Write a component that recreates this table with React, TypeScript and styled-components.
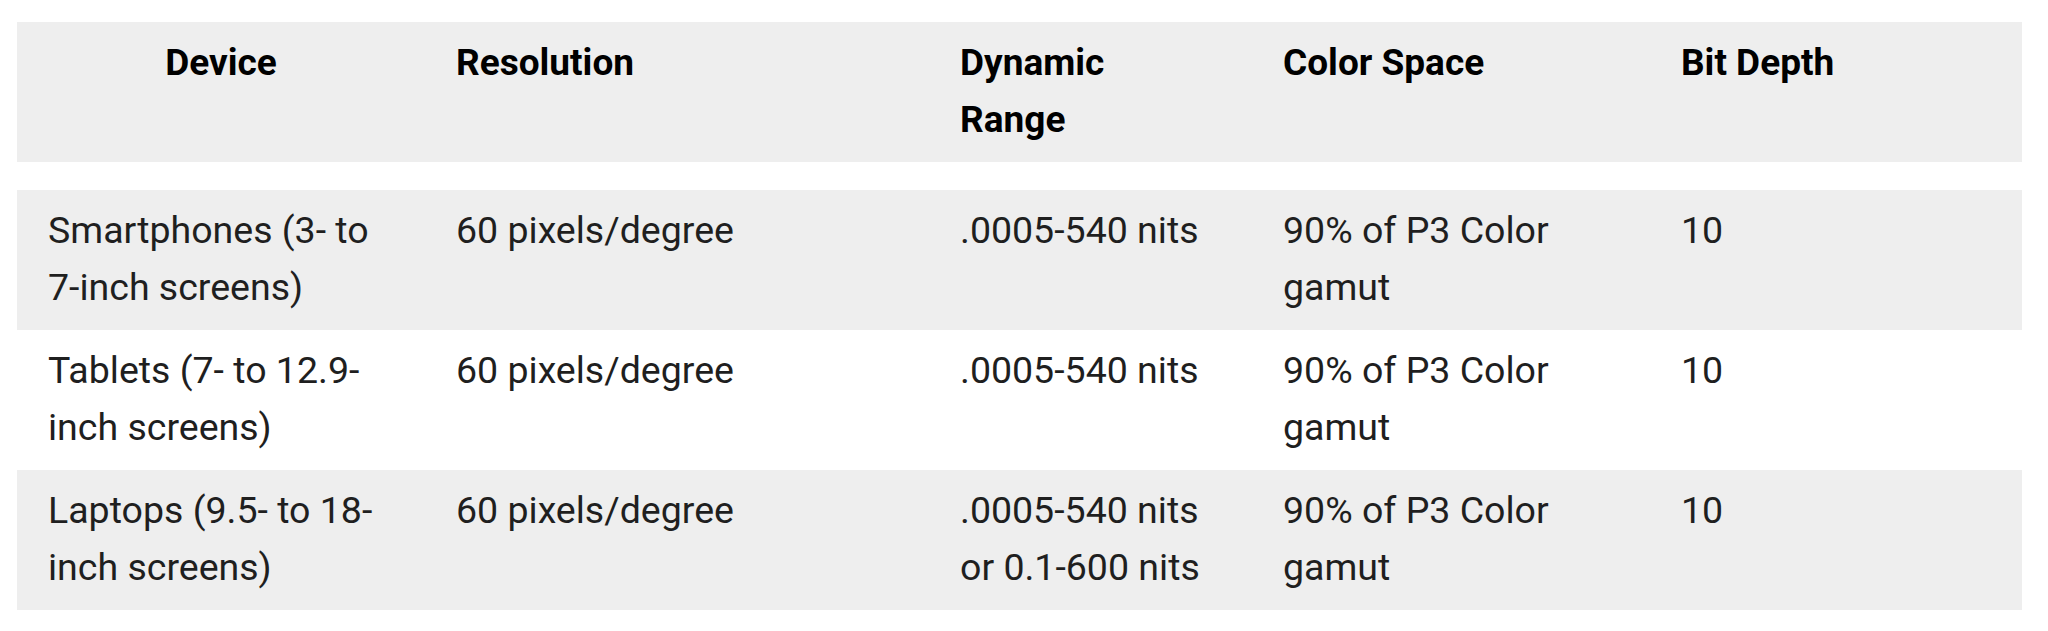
import React from "react";
import styled, { createGlobalStyle } from "styled-components";

const GlobalStyle = createGlobalStyle`
  html, body {
    margin: 0;
    padding: 0;
    background: #ffffff;
  }
  body {
    font-family: Roboto, "Noto Sans", "Liberation Sans", sans-serif;
  }
`;

const Page = styled.div`
  padding: 22px 26px 0 17px;
`;

const Table = styled.div`
  display: grid;
  grid-template-columns: 408px 504px 323px 398px 372px;
  width: 2005px;
`;

const Row = styled.div`
  display: contents;
`;

const Spacer = styled.div`
  grid-column: 1 / -1;
  height: 28px;
`;

const HeadCell = styled.div<{ $center?: boolean }>`
  background: #eeeeee;
  color: #000000;
  font-weight: 700;
  font-size: 37px;
  line-height: 57px;
  padding: ${(p) => (p.$center ? "12px 31px 14px" : "12px 50px 14px 31px")};
  text-align: ${(p) => (p.$center ? "center" : "left")};
  min-height: 114px;
`;

const Cell = styled.div<{ $shade: boolean }>`
  background: ${(p) => (p.$shade ? "#eeeeee" : "#ffffff")};
  color: #1f1f1f;
  font-weight: 400;
  font-size: 37.5px;
  line-height: 57px;
  padding: 12px 40px 14px 31px;
  min-height: 114px;
`;

const headers = ["Device", "Resolution", "Dynamic Range", "Color Space", "Bit Depth"];

const rows: string[][] = [
  ["Smartphones (3- to 7-inch screens)", "60 pixels/degree", ".0005-540 nits", "90% of P3 Color gamut", "10"],
  ["Tablets (7- to 12.9-inch screens)", "60 pixels/degree", ".0005-540 nits", "90% of P3 Color gamut", "10"],
  ["Laptops (9.5- to 18-inch screens)", "60 pixels/degree", ".0005-540 nits or 0.1-600 nits", "90% of P3 Color gamut", "10"],
];

export default function App() {
  return (
    <>
      <GlobalStyle />
      <Page>
        <Table>
          <Row>
            {headers.map((h, i) => (
              <HeadCell key={h} $center={i === 0}>
                {h}
              </HeadCell>
            ))}
          </Row>
          <Spacer />
          {rows.map((r, ri) => (
            <Row key={ri}>
              {r.map((c, ci) => (
                <Cell key={ci} $shade={ri % 2 === 0}>
                  {c}
                </Cell>
              ))}
            </Row>
          ))}
        </Table>
      </Page>
    </>
  );
}
